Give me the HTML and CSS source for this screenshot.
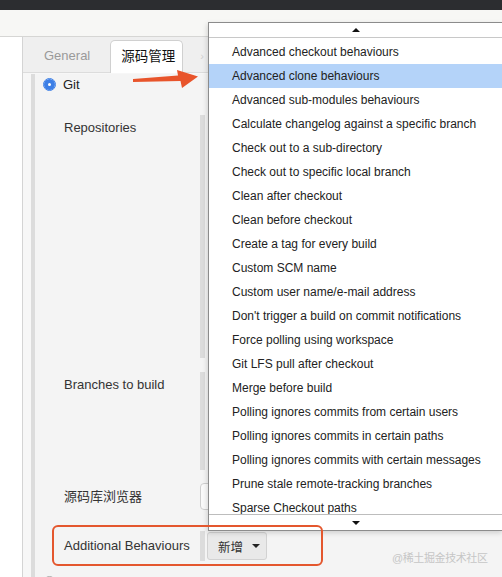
FILE: index.html
```html
<!DOCTYPE html>
<html lang="zh-CN">
<head>
    <meta charset="UTF-8">
    <title>源码管理 - Git</title>
    <link rel="stylesheet" href="styles.css">
</head>
<body>
    <div class="topbar"></div>
    <div class="toolbar"></div>
    <div class="main">
        <div class="gutter"></div>
        <div class="config">
            <div class="tabs">
                <div class="tab">General</div>
                <div class="tab active">源码管理</div>
                <div class="tab faded">›</div>
            </div>
            <div class="scm">
                <div class="radio-row">
                    <span class="radio checked"></span>
                    <span>Git</span>
                </div>
                <div class="field repos">
                    <div class="label">Repositories</div>
                    <div class="control stripe"></div>
                </div>
                <div class="field branches">
                    <div class="label">Branches to build</div>
                    <div class="control stripe"></div>
                </div>
                <div class="field browser">
                    <div class="label">源码库浏览器</div>
                    <div class="control"><div class="select-box"></div></div>
                </div>
                <div class="field behaviours">
                    <div class="label">Additional Behaviours</div>
                    <div class="control stripe short">
                        <button class="add-btn">新增<span class="caret"></span></button>
                    </div>
                </div>
                <div class="radio-row next">
                    <span class="radio"></span>
                    <span>Subversion</span>
                </div>
            </div>
        </div>
    </div>

    <div class="dropdown">
        <div class="scroll-up"><span class="tri up"></span></div>
        <ul class="options">
            <li>Advanced checkout behaviours</li>
            <li class="selected">Advanced clone behaviours</li>
            <li>Advanced sub-modules behaviours</li>
            <li>Calculate changelog against a specific branch</li>
            <li>Check out to a sub-directory</li>
            <li>Check out to specific local branch</li>
            <li>Clean after checkout</li>
            <li>Clean before checkout</li>
            <li>Create a tag for every build</li>
            <li>Custom SCM name</li>
            <li>Custom user name/e-mail address</li>
            <li>Don't trigger a build on commit notifications</li>
            <li>Force polling using workspace</li>
            <li>Git LFS pull after checkout</li>
            <li>Merge before build</li>
            <li>Polling ignores commits from certain users</li>
            <li>Polling ignores commits in certain paths</li>
            <li>Polling ignores commits with certain messages</li>
            <li>Prune stale remote-tracking branches</li>
            <li>Sparse Checkout paths</li>
        </ul>
        <div class="scroll-down"><span class="tri down"></span></div>
    </div>

    <!-- annotations -->
    <svg class="pointer" width="502" height="577" viewBox="0 0 502 577">
        <polygon points="133,79 178,75.5 177,70 198,76.5 182,88 180.5,81 133,82" fill="#e8542b"/>
    </svg>
    <div class="mark-box"></div>
    <div class="watermark">@稀土掘金技术社区</div>
</body>
</html>
```

FILE: styles.css
```css
html, body {
    margin: 0;
    height: 577px;
    overflow: hidden;
}
body {
    font-family: "Liberation Sans", "Noto Sans CJK SC", Arial, sans-serif;
    font-size: 13px;
    color: #333;
    background-color: #fff;
    position: relative;
}
.topbar {
    height: 10px;
    background-color: #2c2d30;
}
.toolbar {
    height: 26px;
    background-color: #f7f7f5;
    border-bottom: 1px solid #d6d6d4;
}
.main {
    display: flex;
    height: 540px;
}
.gutter {
    width: 22px;
    background-color: #fff;
    border-right: 1px solid #d4d4d4;
}
.config {
    flex: 1;
    background-color: #f7f7f7;
}
.tabs {
    display: flex;
    align-items: flex-end;
    height: 35px;
    background-color: #efefef;
    border-bottom: 1px solid #dcdcdc;
}
.tab {
    height: 32px;
    line-height: 32px;
    padding: 0 20px 0 21px;
    color: #9a9a9a;
    white-space: nowrap;
}
.tab.active {
    padding: 0 10px;
    width: 51px;
    background-color: #fff;
    color: #111;
    font-size: 13.5px;
    border: 1px solid #d0d0d0;
    border-bottom: none;
    border-radius: 5px 5px 0 0;
    margin-bottom: -1px;
    height: 32px;
}
.tab.faded {
    padding: 0 0 0 17px;
    font-size: 11px;
    color: #cfcfcf;
}
.scm {
    margin-left: 8px;
    border-left: 4px solid #dcdcdc;
    background-color: #f4f4f4;
    height: 504px;
    padding-left: 8px;
}
.radio-row {
    display: flex;
    align-items: center;
    height: 20px;
    margin-top: 1px;
    color: #222;
}
.radio-row.next {
    margin-top: 11px;
    color: #555;
}
.radio {
    width: 11px;
    height: 11px;
    border: 1px solid #aaa;
    border-radius: 50%;
    background-color: #fff;
    margin-right: 7px;
}
.radio.checked {
    border-color: #3d7fe6;
    box-shadow: inset 0 0 0 4px #3d7fe6;
}
.field {
    display: flex;
    padding-left: 21px;
}
.field .label {
    width: 136px;
    line-height: 16px;
    color: #333;
}
.repos {
    margin-top: 21px;
    height: 243px;
}
.branches {
    margin-top: 14px;
    height: 98px;
}
.repos .label, .branches .label {
    padding-top: 5px;
}
.browser {
    margin-top: 13px;
    height: 27px;
    align-items: center;
}
.behaviours {
    margin-top: 21px;
    height: 30px;
    align-items: center;
}
.control {
    flex: 1;
    height: 100%;
}
.stripe {
    border-left: 5px solid #dcdcdc;
}
.stripe.short {
    display: flex;
    align-items: center;
}
.select-box {
    height: 25px;
    border: 1px solid #cfcfcf;
    border-radius: 4px;
    background-color: #fafafa;
}
.add-btn {
    display: flex;
    align-items: center;
    margin-left: 2px;
    width: 60px;
    height: 28px;
    padding: 0 0 0 10px;
    font-family: inherit;
    font-size: 12.5px;
    color: #333;
    background-color: #e9e9e9;
    border: 1px solid #d2d2d2;
    border-radius: 3px;
}
.caret {
    margin-left: 9px;
    border-left: 4px solid transparent;
    border-right: 4px solid transparent;
    border-top: 4px solid #222;
}
.dropdown {
    position: absolute;
    left: 208px;
    top: 22px;
    width: 294px;
    background-color: #fff;
    border: 1px solid #8c8c8c;
    border-right: none;
    box-shadow: -1px 2px 5px rgba(0,0,0,0.15);
}
.scroll-up, .scroll-down {
    display: flex;
    justify-content: center;
    align-items: center;
}
.scroll-up {
    height: 14px;
    border-bottom: 1px solid #c8c8c8;
}
.scroll-down {
    height: 15px;
    border-top: 1px solid #bdbdbd;
}
.tri {
    border-left: 4px solid transparent;
    border-right: 4px solid transparent;
}
.tri.up {
    border-bottom: 4px solid #111;
}
.tri.down {
    border-top: 4px solid #111;
}
.options {
    list-style: none;
    margin: 0;
    padding: 2px 0 0;
    height: 474px;
    overflow: hidden;
}
.options li {
    height: 24px;
    line-height: 24px;
    padding-left: 23px;
    font-size: 12px;
    color: #222;
    white-space: nowrap;
}
.options li.selected {
    background-color: #b4d3f9;
}
.pointer {
    position: absolute;
    left: 0;
    top: 0;
    pointer-events: none;
}
.mark-box {
    position: absolute;
    left: 52px;
    top: 525px;
    width: 267px;
    height: 37px;
    border: 2px solid #e4572e;
    border-radius: 6px;
}
.watermark {
    position: absolute;
    left: 392px;
    top: 549px;
    font-size: 11px;
    letter-spacing: -0.4px;
    color: #c6c6c6;
}
```
